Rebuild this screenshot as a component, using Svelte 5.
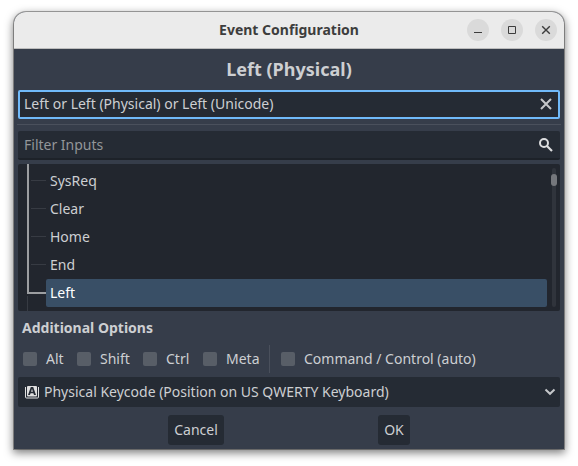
<script>
  const keys = ['SysReq', 'Clear', 'Home', 'End', 'Left'];
  const selected = 'Left';
  const modifiers = [
    { label: 'Alt', width: 54 },
    { label: 'Shift', width: 66 },
    { label: 'Ctrl', width: 60 },
    { label: 'Meta', width: 66 }
  ];
</script>

<div class="desktop">
  <section class="window">
    <header class="titlebar">
      <span class="title">Event Configuration</span>
      <div class="controls">
        <button aria-label="Minimize"><svg width="22" height="22" viewBox="0 0 22 22"><path d="M7 13.5h8" /></svg></button>
        <button aria-label="Maximize"><svg width="22" height="22" viewBox="0 0 22 22"><path d="M7.5 7.5h7v7h-7z" /></svg></button>
        <button aria-label="Close"><svg width="22" height="22" viewBox="0 0 22 22"><path class="cross" d="M7.2 7.2l7.6 7.6M14.8 7.2l-7.6 7.6" /></svg></button>
      </div>
    </header>

    <main>
      <h1><span>Left (Physical)</span></h1>

      <div class="field focused">
        <span>Left or Left (Physical) or Left (Unicode)</span>
        <svg width="16" height="16" viewBox="0 0 16 16"><path d="M3 3l10 10M13 3L3 13" stroke="#c5c7ca" stroke-width="2" /></svg>
      </div>

      <div class="rule"></div>

      <div class="field filter">
        <span>Filter Inputs</span>
        <svg width="16" height="16" viewBox="0 0 16 16" fill="none" stroke="#dcdddf" stroke-width="2">
          <circle cx="6" cy="6" r="4" /><path d="M9 9l5 5" stroke-width="2.2" />
        </svg>
      </div>

      <div class="tree">
        <svg class="branches" width="28" height="147" viewBox="0 0 28 147" shape-rendering="crispEdges">
          <path d="M13 16.5h15M13 44.5h15M13 72.5h15M13 100.5h15M9.5 132v15" stroke="#373b43" />
          <path d="M10 0v129h18" fill="none" stroke="#9c9ea1" stroke-width="2" />
        </svg>
        <ul>
          {#each keys as key}
            <li class:selected={key === selected}>{key}</li>
          {/each}
        </ul>
        <div class="track"><div class="thumb"></div></div>
      </div>

      <h2>Additional Options</h2>

      <div class="options">
        {#each modifiers as m}
          <label style="width: {m.width}px"><i class="box"></i>{m.label}</label>
        {/each}
        <div class="divider"></div>
        <label class="command"><i class="box"></i>Command / Control (auto)</label>
      </div>

      <div class="dropdown">
        <svg width="16" height="16" viewBox="0 0 16 16">
          <path d="M1.500 3v10a1 1 0 0 0 1 1h11a1 1 0 0 0 1-1V3" fill="none" stroke="#e0e0e0" />
          <path fill="#e0e0e0" fill-rule="evenodd" d="M4 2h8a1 1 0 0 1 1 1v8.500a1 1 0 0 1-1 1H4a1 1 0 0 1-1-1V3a1 1 0 0 1 1-1zM6.800 3L4 11h2l.6-1.700h2.800l.6 1.700h2L9.200 3zM8 4.800l.9 2.900H7.100z" />
        </svg>
        <span>Physical Keycode (Position on US QWERTY Keyboard)</span>
        <svg class="chevron" width="12" height="12" viewBox="0 0 12 12"><path d="M1.500 3.500L6 7.800l4.500-4.300" fill="none" stroke="#c5c7ca" stroke-width="2" /></svg>
      </div>

      <footer>
        <button class="cancel">Cancel</button>
        <button class="ok">OK</button>
      </footer>
    </main>
  </section>
</div>

<style>
  :global(body) {
    background: #fff;
  }
  .desktop {
    box-sizing: border-box;
    width: 578px;
    height: 466px;
    padding: 12px 14px 17px;
    overflow: hidden;
    background: #fff;
    font: 14px/20px 'Noto Sans', sans-serif;
    color: #cdcfd2;
  }
  .window {
    display: flex;
    flex-direction: column;
    width: 550px;
    height: 437px;
    border-radius: 12px 12px 0 0;
    background: #363d4a;
    box-shadow: 0 0 0 1px rgba(0, 0, 0, 0.32), 0 3px 9px 1px rgba(0, 0, 0, 0.5);
  }
  .titlebar {
    display: grid;
    grid-template-columns: 1fr auto 1fr;
    align-items: center;
    flex: none;
    box-sizing: border-box;
    height: 37px;
    border-bottom: 1px solid #bdbdbd;
    border-radius: 12px 12px 0 0;
    background: #ebebeb;
  }
  .title {
    grid-column: 2;
    font: bold 14px/20px 'Noto Sans', sans-serif;
    color: #3d3d3d;
    white-space: nowrap;
  }
  .controls {
    display: flex;
    justify-content: flex-end;
    gap: 12px;
    padding-right: 7px;
  }
  .controls button {
    width: 22px;
    height: 22px;
    padding: 0;
    border: 0;
    border-radius: 50%;
    background: #dadada;
  }
  .controls svg {
    fill: none;
    stroke: #3d3d3d;
  }
  .controls .cross {
    stroke-width: 1.4;
  }
  svg {
    display: block;
    flex: none;
  }
  main {
    display: flex;
    flex-direction: column;
    height: 400px;
    padding: 0 4px;
  }
  h1 {
    height: 41px;
    margin: 0;
    font-size: 18px;
    line-height: 41px;
    text-align: center;
  }
  .field {
    display: flex;
    align-items: center;
    justify-content: space-between;
    box-sizing: border-box;
    padding: 0 6px;
    border-radius: 2px;
    background: #252b34;
  }
  .focused {
    height: 29px;
    padding: 0 4px 1px;
    border: 2px solid #70bafa;
  }
  .rule {
    height: 1px;
    margin: 5px -1px 6px;
    background: #4a505c;
  }
  .filter {
    height: 29px;
    border-bottom: 2px solid #1d2229;
    color: #939699;
  }
  .tree {
    display: flex;
    height: 147px;
    margin-top: 4px;
    border-radius: 2px;
    background: #22262e;
  }
  ul {
    width: 501px;
    margin: 3px 0 0;
    padding: 0;
    list-style: none;
  }
  li {
    height: 28px;
    padding-left: 4px;
    border-radius: 2px;
    line-height: 28px;
  }
  .selected {
    background: #394f66;
    color: #fff;
  }
  .track {
    width: 4px;
    height: 139px;
    margin: 4px 0 0 5px;
    border-radius: 2px;
    background: #30343c;
  }
  .thumb {
    width: 6px;
    height: 12px;
    margin: 6px -1px 0;
    border-radius: 3px;
    background: #75777c;
  }
  h2 {
    margin: 7px 4px 7px;
    font-size: 14px;
    line-height: 20px;
  }
  .options {
    display: flex;
    align-items: center;
    height: 28px;
    padding-left: 5px;
  }
  label {
    display: flex;
    align-items: center;
    gap: 9px;
    white-space: nowrap;
  }
  .box {
    flex: none;
    width: 14px;
    height: 14px;
    border-radius: 2px;
    background: #585e67;
  }
  .divider {
    width: 1px;
    height: 28px;
    background: #4a505c;
  }
  .command {
    margin-left: 11px;
  }
  .dropdown {
    display: flex;
    align-items: center;
    height: 30px;
    margin-top: 4px;
    padding: 0 4px 0 6px;
    border-radius: 2px;
    background: #252b34;
  }
  .dropdown span {
    flex: 1;
    margin-left: 4px;
  }
  footer {
    display: flex;
    gap: 154px;
    margin: 8px 0 0 150px;
  }
  footer button {
    height: 30px;
    padding: 0;
    border: 0;
    border-radius: 3px;
    background: #252b34;
    color: inherit;
    font: inherit;
  }
  .cancel {
    width: 56px;
  }
  .ok {
    width: 32px;
  }
</style>
